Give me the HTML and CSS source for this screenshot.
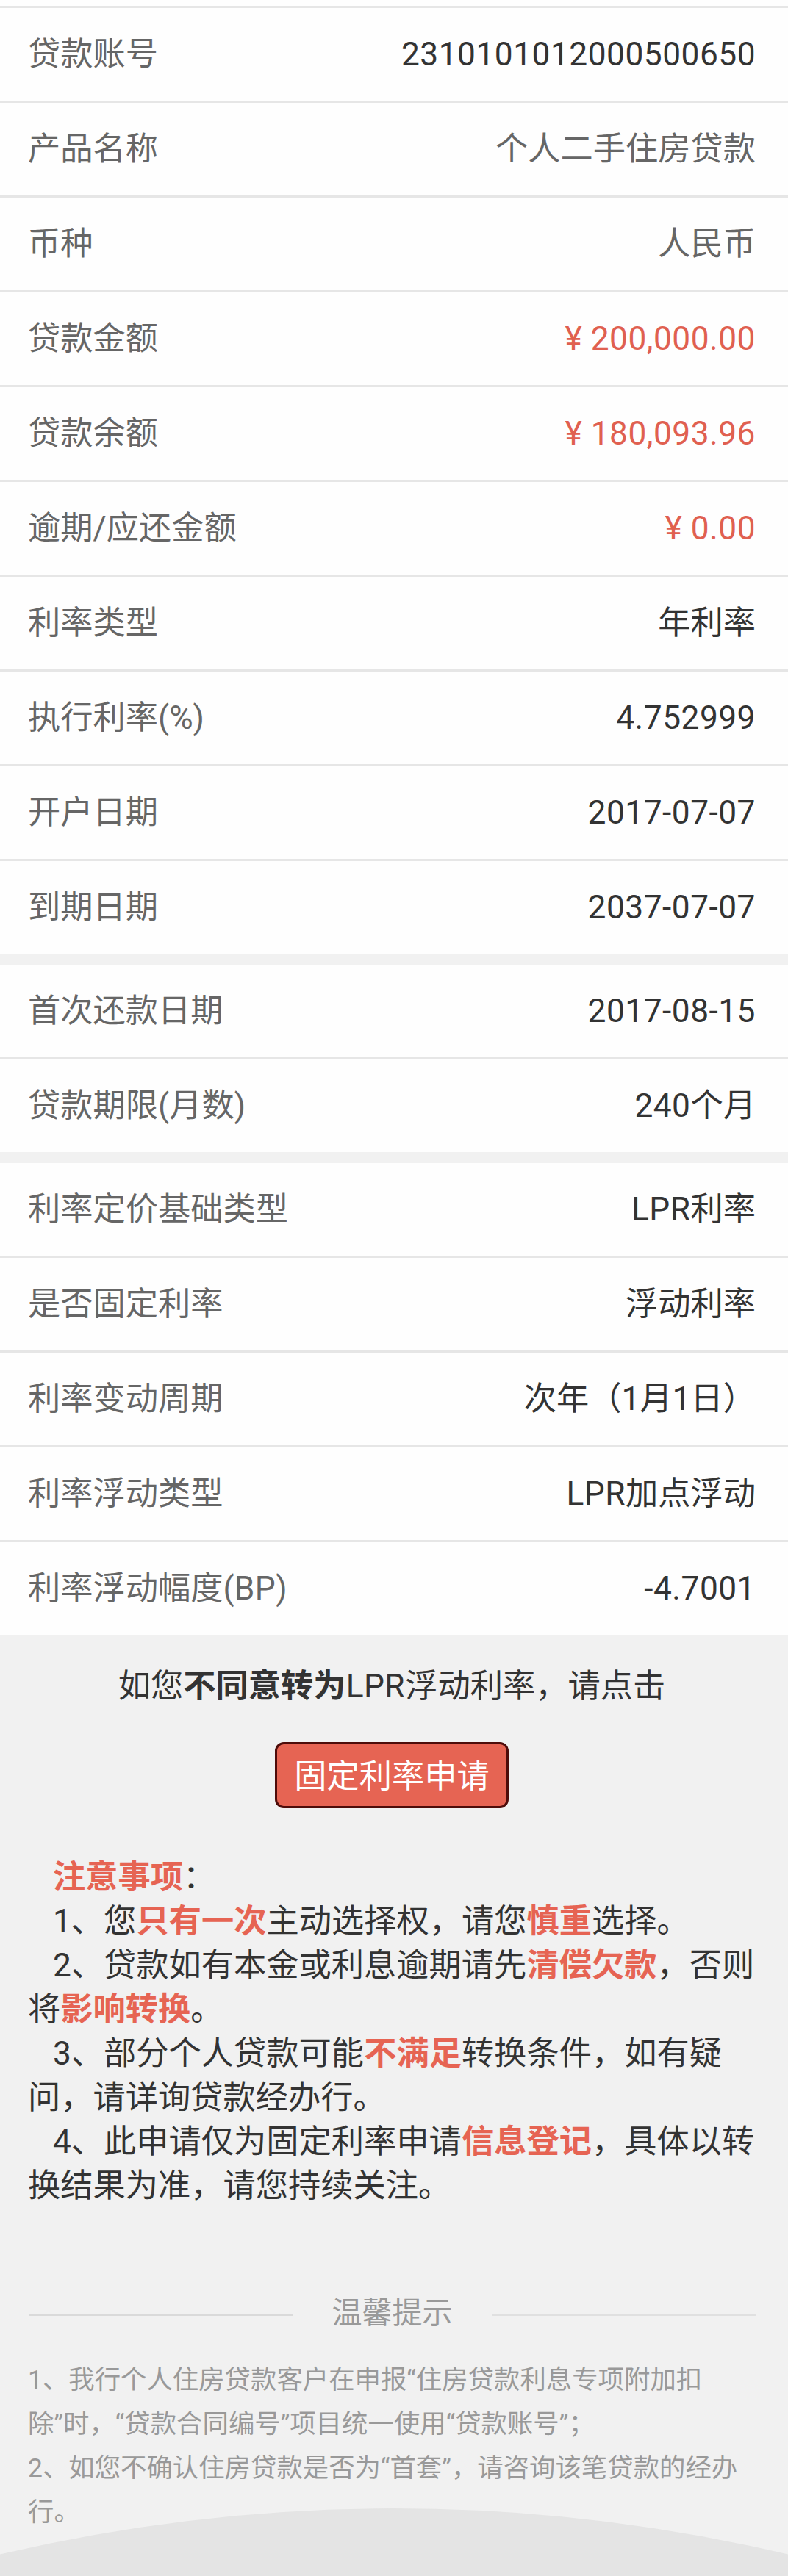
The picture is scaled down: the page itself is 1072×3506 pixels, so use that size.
FILE: index.html
```
<!DOCTYPE html>
<html lang="zh-CN">
<head>
    <meta charset="UTF-8">
    <meta name="viewport" content="width=device-width, initial-scale=1.0">
    <title>贷款详情</title>
    <link rel="stylesheet" href="styles.css">
</head>
<body>
    <div class="list list-first">
        <div class="row"><span class="label">贷款账号</span><span class="value num">2310101012000500650</span></div>
        <div class="row"><span class="label">产品名称</span><span class="value light">个人二手住房贷款</span></div>
        <div class="row"><span class="label">币种</span><span class="value light">人民币</span></div>
        <div class="row"><span class="label">贷款金额</span><span class="value num money">¥ 200,000.00</span></div>
        <div class="row"><span class="label">贷款余额</span><span class="value num money">¥ 180,093.96</span></div>
        <div class="row"><span class="label">逾期/应还金额</span><span class="value num money">¥ 0.00</span></div>
        <div class="row"><span class="label">利率类型</span><span class="value">年利率</span></div>
        <div class="row"><span class="label">执行利率(%)</span><span class="value num">4.752999</span></div>
        <div class="row"><span class="label">开户日期</span><span class="value num">2017-07-07</span></div>
        <div class="row"><span class="label">到期日期</span><span class="value num">2037-07-07</span></div>
    </div>

    <div class="list">
        <div class="row"><span class="label">首次还款日期</span><span class="value num">2017-08-15</span></div>
        <div class="row"><span class="label">贷款期限(月数)</span><span class="value"><span class="num">240</span>个月</span></div>
    </div>

    <div class="list">
        <div class="row"><span class="label">利率定价基础类型</span><span class="value"><span class="num">LPR</span>利率</span></div>
        <div class="row"><span class="label">是否固定利率</span><span class="value">浮动利率</span></div>
        <div class="row"><span class="label">利率变动周期</span><span class="value">次年（1月1日）</span></div>
        <div class="row"><span class="label">利率浮动类型</span><span class="value"><span class="num">LPR</span>加点浮动</span></div>
        <div class="row"><span class="label">利率浮动幅度(<span class="num">BP</span>)</span><span class="value num">-4.7001</span></div>
    </div>

    <div class="apply">
        <p class="apply-text">如您<b>不同意转为</b><span class="num">LPR</span>浮动利率，请点击</p>
        <button class="apply-button">固定利率申请</button>
    </div>

    <div class="notice">
        <p><b>注意事项</b>：</p>
        <p>1、您<b>只有一次</b>主动选择权，请您<b>慎重</b>选择。</p>
        <p>2、贷款如有本金或利息逾期请先<b>清偿欠款</b>，否则将<b>影响转换</b>。</p>
        <p>3、部分个人贷款可能<b>不满足</b>转换条件，如有疑问，请详询贷款经办行。</p>
        <p>4、此申请仅为固定利率申请<b>信息登记</b>，具体以转换结果为准，请您持续关注。</p>
    </div>

    <div class="tips">
        <div class="tips-title">温馨提示</div>
        <p>1、我行个人住房贷款客户在申报“住房贷款利息专项附加扣<br>除”时，“贷款合同编号”项目统一使用“贷款账号”；</p>
        <p>2、如您不确认住房贷款是否为“首套”，请咨询该笔贷款的经办行。</p>
    </div>

    <!-- fondo curvo del pie -->
    <svg class="footer-arc" viewBox="0 0 1072 92" aria-hidden="true">
        <path d="M0 62.5 A2333 2333 0 0 1 1072 62.5 V92 H0 Z" fill="#e4e4e4"/>
    </svg>
</body>
</html>
```

FILE: styles.css
```
* {
    box-sizing: border-box;
}
body {
    position: relative;
    height: 3506px;
    margin: 0;
    font-family: Roboto, "Noto Sans CJK SC", sans-serif;
    font-size: 44.25px;
    line-height: 60px;
    background-color: #f1f1f1;
    color: #333;
    overflow: hidden;
}
p {
    margin: 0;
}
.list {
    margin-bottom: 15px;
    background-color: #fefefe;
}
.list-first {
    padding-top: 8px;
}
.row {
    display: flex;
    justify-content: space-between;
    align-items: center;
    height: 129px;
    padding: 0 44px 0 38px;
    border-top: 3px solid #e6e6e6;
}
.list:not(.list-first) .row:first-child {
    height: 126px;
    border-top: none;
}
.label,
.light {
    color: #666;
}
.value {
    text-align: right;
}
.num {
    letter-spacing: 0.5px;
}
.money {
    color: #e06050;
}
.apply {
    margin-top: -15px;
    padding: 40px 6px 0 0;
    text-align: center;
}
.apply-button {
    display: block;
    width: 318px;
    height: 90px;
    margin: 46px auto 0;
    padding: 3px 0 0;
    border: 3px solid #4e0c0a;
    border-radius: 12px;
    background-color: #e66453;
    color: #fff;
    font-family: inherit;
    font-size: 44.25px;
    line-height: 60px;
}
.notice {
    padding: 64px 39px 0 38px;
}
.notice p {
    text-indent: 34px;
}
.notice b {
    color: #e66453;
}
.tips {
    position: relative;
    z-index: 1;
    padding: 113px 44px 0 39px;
    color: #999;
    font-size: 35.4px;
}
.tips p {
    margin-left: -1px;
}
.tips-title {
    display: flex;
    align-items: center;
    gap: 54px;
    margin-bottom: 31px;
    font-size: 41px;
}
.tips-title::before,
.tips-title::after {
    content: "";
    flex: 1;
    height: 3px;
    margin-top: 4px;
    background-color: #dadada;
}
.tips-title::after {
    background-color: #e0e0e0;
}
.footer-arc {
    position: absolute;
    left: 0;
    bottom: 0;
    width: 1072px;
    height: 92px;
}
```
